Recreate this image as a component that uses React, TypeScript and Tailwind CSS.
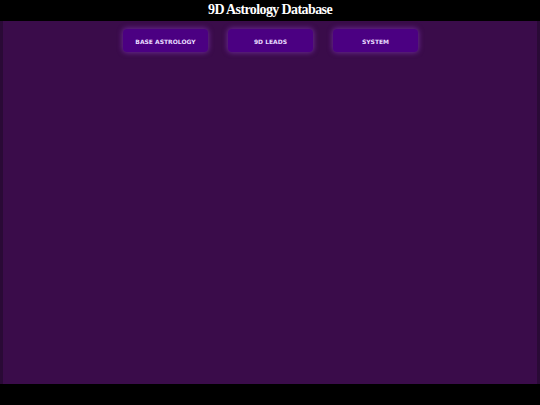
const sections = ["BASE ASTROLOGY", "9D LEADS", "SYSTEM"];

export default function App() {
  return (
    <div className="flex h-[405px] w-[540px] flex-col bg-black" style={{ fontFamily: '"Liberation Sans", Arial, sans-serif' }}>
      <header className="flex h-[21px] items-center justify-center pb-[1px]">
        <h1 className="text-[14px] font-bold leading-none tracking-[-0.6px] text-white" style={{ fontFamily: '"Liberation Serif", "Times New Roman", serif' }}>
          9D Astrology Database
        </h1>
      </header>

      <main className="flex-1 border-x-[3px] border-[#2a0a36] bg-[#3a0c4a] pt-[8px]">
        <nav className="flex justify-center gap-[20px] pl-[1px]">
          {sections.map((label) => (
            <button
              key={label}
              className="flex h-[23px] w-[85px] items-center justify-center rounded-[4px] bg-[#4b0082] pt-[1px] text-[6px] font-bold text-[#e8dcff] shadow-[0_0_5px_1px_rgba(140,60,200,0.55)]"
              style={{ fontFamily: '"DejaVu Sans", Verdana, sans-serif' }}
            >
              {label}
            </button>
          ))}
        </nav>
      </main>

      <footer className="h-[21px]" />
    </div>
  );
}
